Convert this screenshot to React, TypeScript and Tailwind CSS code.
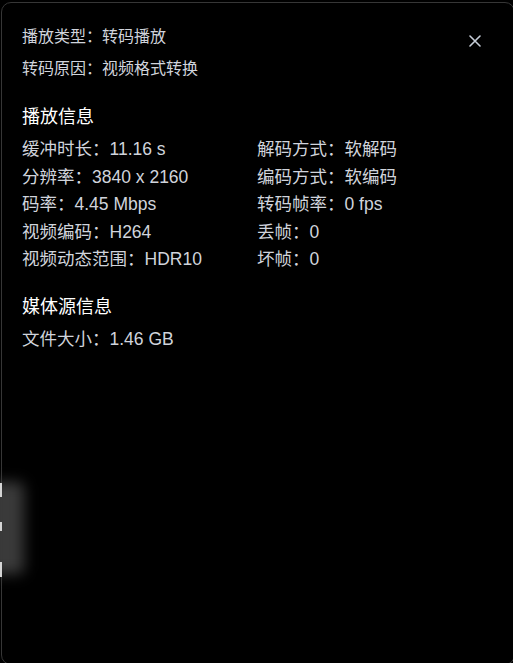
import React from 'react';

const font = { fontFamily: '"Liberation Sans", "Noto Sans CJK SC", sans-serif' };

const playback: [string, string][] = [
  ['缓冲时长：11.16 s', '解码方式：软解码'],
  ['分辨率：3840 x 2160', '编码方式：软编码'],
  ['码率：4.45 Mbps', '转码帧率：0 fps'],
  ['视频编码：H264', '丢帧：0'],
  ['视频动态范围：HDR10', '坏帧：0'],
];

export default function App() {
  return (
    <div className="relative w-[513px] h-[663px] bg-black overflow-hidden" style={font}>
      {/* Info panel */}
      <div className="mt-[2px] ml-[1px] w-[514px] h-[663px] rounded-[10px] border border-[#363636] bg-black pl-[20px] pr-[33px] pt-[22px] flex flex-col">
        <div className="flex justify-between">
          <div className="text-[16px] leading-[24px] text-[#d0d4dc]">播放类型：转码播放</div>
          <button className="mt-[10px] w-[12px] h-[12px] flex items-center justify-center">
            <svg width="12" height="12" viewBox="0 0 12 12">
              <path d="M1 1 L11 11 M11 1 L1 11" stroke="#c6cdd8" strokeWidth="1.6" strokeLinecap="round" />
            </svg>
          </button>
        </div>
        <div className="mt-[8px] text-[16px] leading-[24px] text-[#d0d4dc]">转码原因：视频格式转换</div>

        <div className="mt-[23px] text-[18px] leading-[26px] text-white">播放信息</div>
        <div className="mt-[6px] grid grid-cols-[235px_1fr] text-[17.5px] leading-[27.5px] text-[#d0d4dc]">
          {playback.map(([a, b]) => (
            <React.Fragment key={a}>
              <div>{a}</div>
              <div>{b}</div>
            </React.Fragment>
          ))}
        </div>

        <div className="mt-[20px] text-[18px] leading-[26px] text-white">媒体源信息</div>
        <div className="mt-[6px] text-[17.5px] leading-[27.5px] text-[#d0d4dc]">文件大小：1.46 GB</div>
      </div>

      {/* blurred element peeking from behind */}
      <div className="absolute left-[-12px] top-[482px] w-[36px] h-[92px] rounded-[6px] bg-[#3a3a3a] blur-[7px]" />
      <div className="absolute left-0 top-[483px] w-[2px] h-[14px] bg-[#d4d4d4]" />
      <div className="absolute left-0 top-[522px] w-[2px] h-[9px] bg-[#d4d4d4]" />
      <div className="absolute left-0 top-[562px] w-[2px] h-[15px] bg-[#d4d4d4]" />
    </div>
  );
}
